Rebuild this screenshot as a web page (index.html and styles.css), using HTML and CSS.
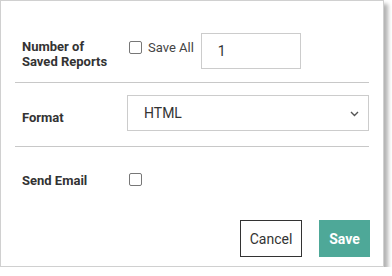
FILE: index.html
```html
<!DOCTYPE html>
<html lang="en">
<head>
    <meta charset="UTF-8">
    <meta name="viewport" content="width=device-width, initial-scale=1.0">
    <title>Report Settings</title>
    <link rel="stylesheet" href="styles.css">
</head>
<body>
    <div class="panel">
        <div class="row row-saved">
            <label class="field-label" for="saved_count">Number of<br>Saved Reports</label>
            <div class="save-all">
                <span class="checkbox"></span>
                <span class="save-all-text">Save All</span>
            </div>
            <input class="text-input" type="text" id="saved_count" value="1">
        </div>

        <div class="row row-format">
            <label class="field-label">Format</label>
            <div class="select">
                <span>HTML</span>
                <svg width="9" height="6" viewBox="0 0 9 6">
                    <path d="M1 1 L4.5 4.5 L8 1" fill="none" stroke="#555" stroke-width="1.4"/>
                </svg>
            </div>
        </div>

        <div class="row row-email">
            <label class="field-label">Send Email</label>
            <span class="checkbox"></span>
        </div>

        <div class="actions">
            <button type="button" class="btn btn-cancel">Cancel</button>
            <button type="button" class="btn btn-save">Save</button>
        </div>
    </div>
</body>
</html>
```

FILE: styles.css
```css
body {
    margin: 0;
    background: #fff;
    font-family: Roboto, "Liberation Sans", Arial, sans-serif;
    color: #333;
}

.panel {
    width: 384px;
    height: 267px;
    box-sizing: border-box;
    border: 1px solid #d0d0d0;
    box-shadow: 4px 4px 4px rgba(0, 0, 0, 0.3);
    padding: 0 14px;
    background: #fff;
}

.row {
    display: flex;
    align-items: flex-start;
    border-bottom: 1px solid #c8c8c8;
    box-sizing: border-box;
}

.field-label {
    width: 105px;
    padding-left: 7px;
    font-size: 13px;
    font-weight: bold;
    line-height: 15px;
    color: #333;
    flex-shrink: 0;
}

.checkbox {
    display: inline-block;
    width: 11px;
    height: 11px;
    border: 1.5px solid #777;
    border-radius: 2px;
    flex-shrink: 0;
}

/* Number of saved reports */
.row-saved {
    height: 82px;
    padding-top: 32px;
}

.row-saved .field-label {
    margin-top: 6px;
}

.save-all {
    display: flex;
    align-items: center;
    margin-top: 7px;
    margin-left: 2px;
}

.save-all-text {
    margin-left: 6px;
    font-size: 13px;
    line-height: 15px;
    color: #444;
}

.text-input {
    width: 100px;
    height: 36px;
    box-sizing: border-box;
    margin-left: 7px;
    border: 1px solid #ccc;
    padding: 0 16px;
    font-family: inherit;
    font-size: 14px;
    color: #333;
    outline: none;
}

/* Format */
.row-format {
    height: 64px;
    padding-top: 12px;
}

.row-format .field-label {
    margin-top: 15px;
}

.select {
    width: 242px;
    height: 36px;
    box-sizing: border-box;
    border: 1px solid #ccc;
    display: flex;
    align-items: center;
    justify-content: space-between;
    padding: 0 9px 0 16px;
    font-size: 14px;
    color: #333;
}

.select svg {
    margin-top: 1px;
}

/* Send email */
.row-email {
    border-bottom: none;
    padding-top: 26px;
    height: 73px;
}

.row-email .checkbox {
    margin-left: 2px;
}

.actions {
    display: flex;
    justify-content: flex-end;
    gap: 17px;
    margin-right: -1px;
}

.btn {
    height: 37px;
    font-family: inherit;
    font-size: 14px;
    cursor: pointer;
    border-radius: 0;
}

.btn-cancel {
    width: 62px;
    background: #fff;
    color: #333;
    border: 1px solid #333;
}

.btn-save {
    width: 51px;
    background: #4ea898;
    color: #fff;
    font-weight: bold;
    border: none;
}
```
